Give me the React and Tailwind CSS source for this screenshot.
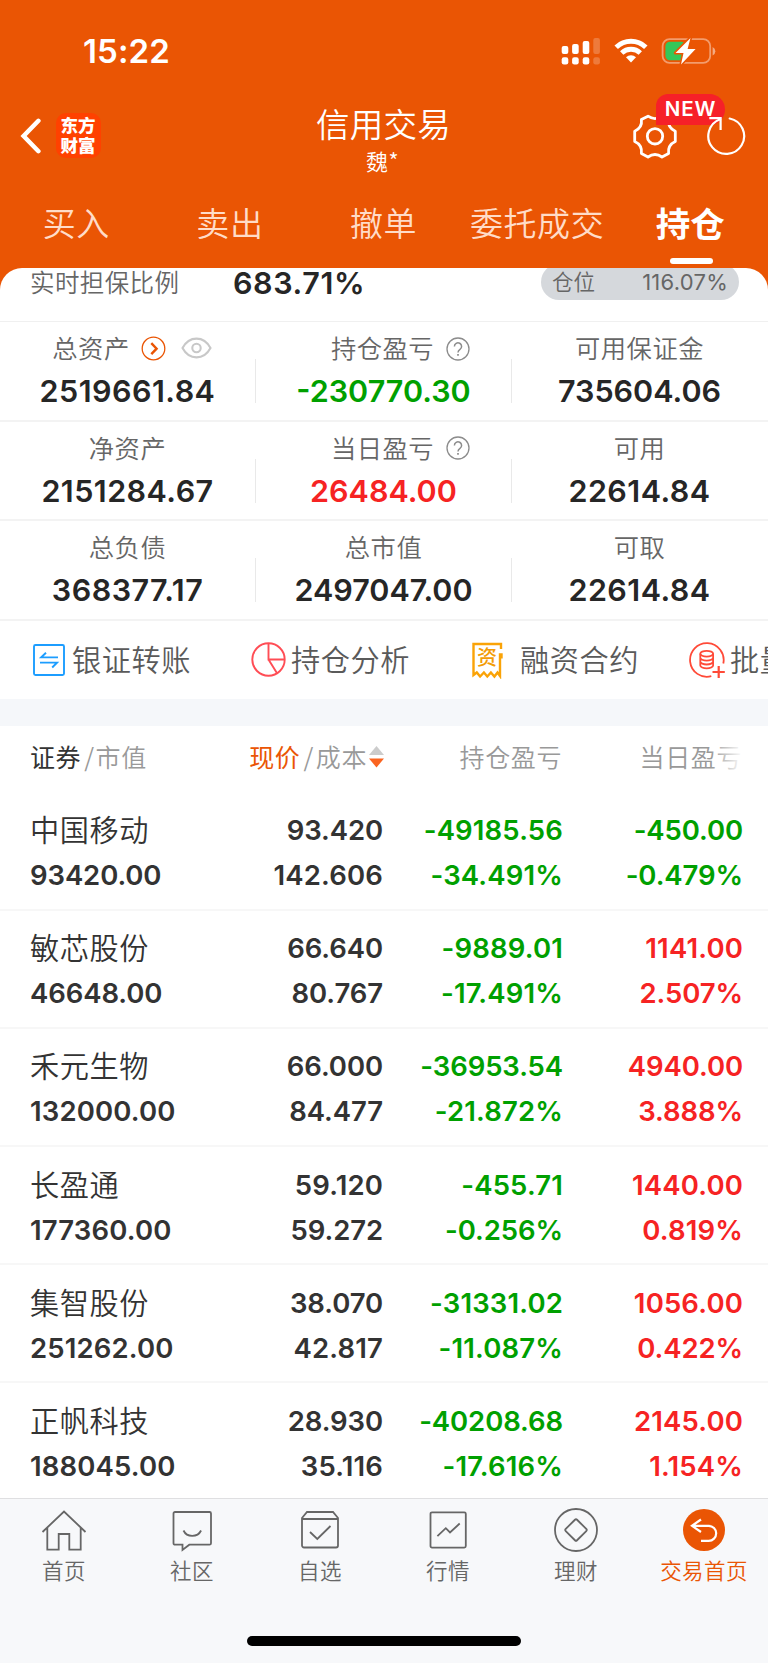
import React, { useState } from "react";

const tabs = ["买入", "卖出", "撤单", "委托成交", "持仓"];

const summary = [
  [
    { label: "总资产", value: "2519661.84", extra: "asset" },
    { label: "持仓盈亏", value: "-230770.30", color: "text-[#00a000]", extra: "help" },
    { label: "可用保证金", value: "735604.06" },
  ],
  [
    { label: "净资产", value: "2151284.67" },
    { label: "当日盈亏", value: "26484.00", color: "text-[#f62323]", extra: "help" },
    { label: "可用", value: "22614.84" },
  ],
  [
    { label: "总负债", value: "368377.17" },
    { label: "总市值", value: "2497047.00" },
    { label: "可取", value: "22614.84" },
  ],
];

const holdings = [
  { name: "中国移动", market: "93420.00", price: "93.420", cost: "142.606", profit: "-49185.56", profitRate: "-34.491%", day: "-450.00", dayRate: "-0.479%" },
  { name: "敏芯股份", market: "46648.00", price: "66.640", cost: "80.767", profit: "-9889.01", profitRate: "-17.491%", day: "1141.00", dayRate: "2.507%" },
  { name: "禾元生物", market: "132000.00", price: "66.000", cost: "84.477", profit: "-36953.54", profitRate: "-21.872%", day: "4940.00", dayRate: "3.888%" },
  { name: "长盈通", market: "177360.00", price: "59.120", cost: "59.272", profit: "-455.71", profitRate: "-0.256%", day: "1440.00", dayRate: "0.819%" },
  { name: "集智股份", market: "251262.00", price: "38.070", cost: "42.817", profit: "-31331.02", profitRate: "-11.087%", day: "1056.00", dayRate: "0.422%" },
  { name: "正帆科技", market: "188045.00", price: "28.930", cost: "35.116", profit: "-40208.68", profitRate: "-17.616%", day: "2145.00", dayRate: "1.154%" },
];

const signColor = (value) =>
  value.startsWith("-") ? "text-[#00a000]" : "text-[#f62323]";

const Num = ({ children }) => (
  <span className={children.includes("1") ? "tracking-[0.15px]" : "tracking-[-0.1px]"}>
    {children}
  </span>
);

const StatusBar = () => (
  <div className="flex h-[102px] items-center pl-[83px] pr-[51px] text-white">
    <span className="font-[Inter] text-[33px] font-semibold leading-none tracking-[0.1px]">
      15:22
    </span>
    <svg className="ml-auto" width="40" height="28" viewBox="0 0 40 28" fill="#fff">
      <rect x="0.7" y="9" width="6.6" height="8" rx="2" />
      <rect x="11.1" y="7" width="6.6" height="10" rx="2" />
      <rect x="21.7" y="4" width="6.6" height="13" rx="2" />
      <rect x="32.3" y="1" width="6.6" height="16" rx="2" opacity="0.22" />
      <rect x="0.7" y="20.2" width="6.6" height="7.2" rx="2.2" />
      <rect x="11.1" y="20.2" width="6.6" height="7.2" rx="2.2" />
      <rect x="21.7" y="20.2" width="6.6" height="7.2" rx="2.2" />
      <rect x="32.3" y="20.2" width="6.6" height="7.2" rx="2.2" opacity="0.22" />
    </svg>
    <svg className="ml-[13px]" width="34" height="26" viewBox="0 0 34 26">
      <path d="M2.2 9.2a21.5 21.5 0 0 1 29.6 0" fill="none" stroke="#fff" strokeWidth="5" />
      <path d="M7.7 15a13.4 13.4 0 0 1 18.6 0" fill="none" stroke="#fff" strokeWidth="4.8" />
      <path d="M12 19.3a7.2 7.2 0 0 1 10 0l-5 5.2z" fill="#fff" />
    </svg>
    <svg className="ml-[13px]" width="56" height="30" viewBox="0 0 56 30">
      <rect x="1.6" y="3.1" width="47.6" height="23.8" rx="7" fill="none" stroke="#fff" strokeOpacity="0.42" strokeWidth="1.8" />
      <path d="M51.6 11v8.4a4.6 4.6 0 0 0 0-8.4z" fill="#fff" opacity="0.5" />
      <rect x="4.4" y="5.8" width="20" height="18.4" rx="4.4" fill="#34c759" />
      <path d="M29.5 2 14.5 17h8L20 28.5 34.6 12.9h-8z" fill="#fff" stroke="#ea5504" strokeWidth="3.2" paintOrder="stroke" strokeLinejoin="round" />
    </svg>
  </div>
);

const TitleBar = () => (
  <div className="flex h-[84px] items-start text-white">
    <div className="flex w-[256px] items-center pl-5 pt-[11px]">
      <svg width="22" height="36" viewBox="0 0 22 36" fill="none" stroke="#fff" strokeWidth="4.5">
        <path d="M18.4 2.8 3.6 18l14.8 15.2" strokeLinecap="round" strokeLinejoin="miter" />
      </svg>
      <div className="ml-[13.5px] flex h-[45px] w-[45px] flex-col items-center justify-center rounded-[10px] bg-[#ff4100] pb-[2px] text-[17.5px] font-black leading-[19.5px]">
        <span>东方</span>
        <span>财富</span>
      </div>
    </div>
    <div className="flex w-[256px] flex-col items-center">
      <h1 className="mr-px mt-1 text-[33.5px] font-[350] leading-[34px] tracking-[0.3px]">信用交易</h1>
      <span className="mr-[3px] mt-2 text-[22px] font-[350] leading-6 tracking-[0.5px]">魏*</span>
    </div>
    <div className="relative w-[256px]">
      <svg className="ml-[120px] mt-[12px]" width="46" height="46" viewBox="0 0 46 46" fill="none" stroke="#fff" strokeWidth="2.8" strokeLinejoin="round">
        <path d="M16 2.2Q23 7 30 2.2L36.6 5.6Q35.5 13.5 43.3 17.2V27.4Q35.5 31 36.6 39.4L30 43Q23 38 16 43L9.4 39.4Q10.5 31 2.7 27.4V17.2Q10.5 13.5 9.4 5.6Z" />
        <circle cx="23" cy="22.3" r="7.7" />
      </svg>
      <span className="absolute left-[144px] top-[-8px] flex h-[31px] w-[69px] items-center justify-center rounded-tl-[14px] rounded-tr-[18px] rounded-br-[18px] bg-[#f62028] font-[Inter] text-[20.5px] font-semibold leading-none tracking-[0.9px]">
        NEW
      </span>
      <svg className="absolute left-[193px] top-[13px]" width="42" height="42" viewBox="0 0 42 42" fill="none" stroke="#fff" strokeWidth="2.2">
        <path d="M24.7 3.5A17.9 17.9 0 1 1 15.2 4.2" strokeLinecap="round" />
        <path d="M4.3 3.2H15.6V15" />
      </svg>
    </div>
  </div>
);

const Tabs = ({ active, onChange }) => (
  <div className="grid h-[82px] grid-cols-5">
    {tabs.map((tab) => (
      <button
        key={tab}
        onClick={() => onChange(tab)}
        className="flex flex-col items-center whitespace-nowrap pt-[18px]"
      >
        {tab === active ? (
          <>
            <span className="mr-[2px] text-[34.5px] font-bold leading-9 text-white">{tab}</span>
            <i className="mt-[18px] h-1.5 w-[43px] rounded-full bg-white" />
          </>
        ) : (
          <span className="mr-px text-[33px] font-[350] leading-9 tracking-[0.6px] text-[#ffdcc8]">{tab}</span>
        )}
      </button>
    ))}
  </div>
);

const HelpIcon = () => (
  <svg className="ml-3 mt-px" width="24" height="24" viewBox="0 0 24 24" fill="none" stroke="#8c8c8c" strokeWidth="1.3">
    <circle cx="12" cy="12" r="11" />
    <path d="M8.4 9.4a3.6 3.6 0 1 1 5.6 3c-1.3.9-2 1.5-2 3.2" strokeWidth="1.5" />
    <path d="M12 17v1.8" strokeWidth="1.7" />
  </svg>
);

const AssetIcons = () => (
  <>
    <svg className="ml-[11px] mt-px" width="25" height="25" viewBox="0 0 25 25" fill="none" stroke="#ea5504">
      <circle cx="12.5" cy="12.5" r="11.3" strokeWidth="1.3" />
      <path d="m10.3 7.2 5.3 5.5-5.3 5.5" strokeWidth="2.4" />
    </svg>
    <svg className="ml-[15px] mr-[2px]" width="31" height="22" viewBox="0 0 31 22" fill="none" stroke="#c8c8c8" strokeWidth="2.1">
      <path d="M1.5 11C5 4.5 9.8 1.6 15.5 1.6S26 4.5 29.5 11C26 17.5 21.2 20.4 15.5 20.4S5 17.5 1.5 11Z" />
      <circle cx="15.5" cy="11" r="4.2" />
    </svg>
  </>
);

const extraPadding = { help: "pl-[33px]", asset: "pl-[10px]" };

const SummaryCell = ({ item, last }) => (
  <div className="relative flex flex-col items-center pt-[12px]">
    <div className={`flex h-[28px] items-center text-[25.3px] font-[350] leading-7 tracking-[0.5px] text-[#666] ${extraPadding[item.extra] || "pr-[1px]"}`}>
      <span className="-mt-[2px]">{item.label}</span>
      {item.extra === "help" && <HelpIcon />}
      {item.extra === "asset" && <AssetIcons />}
    </div>
    <div
      className={`mr-[1px] mt-[13px] font-[Inter] text-[30.5px] font-semibold leading-[32px] ${
        item.value.includes("1") ? "tracking-[0.45px]" : ""
      } ${item.color || "text-[#262626]"}`}
    >
      {item.value}
    </div>
    {!last && <i className="absolute right-0 top-[37px] h-[44px] w-px bg-[#e9e9e9]" />}
  </div>
);

const actions = [
  {
    label: "银证转账",
    style: "pl-[32px] w-[219px]",
    gap: "ml-[6px]",
    icon: (
      <svg width="34" height="34" viewBox="0 0 34 34" fill="none" stroke="#1c9dff" strokeWidth="1.9">
        <rect x="2" y="2" width="30" height="30" rx="1.5" />
        <path d="M26 14.4H9.2L14 9.8M8 19.6h17l-4.8 4.9" />
      </svg>
    ),
  },
  {
    label: "持仓分析",
    style: "pl-[32px] w-[218px]",
    gap: "ml-[5px]",
    icon: (
      <svg width="35" height="35" viewBox="0 0 35 35" fill="none" stroke="#ff4d55" strokeWidth="1.9">
        <circle cx="17.5" cy="17.5" r="16.2" />
        <path d="M17.5 1.5v16h16M17.5 17.5l8.4 13.6" />
      </svg>
    ),
  },
  {
    label: "融资合约",
    style: "pl-[34px] w-[251px]",
    gap: "ml-[17px]",
    icon: (
      <span className="relative flex h-[36px] w-[32px] justify-center">
        <svg className="absolute inset-0" width="33" height="37" viewBox="0 0 33 37" fill="none" stroke="#faa307" strokeWidth="2.4">
          <path d="M30 7V2H2.5V33l3.3-2.5 3.3 4 3.8-4 3.4 4 3.6-4 3.5 4 3.1-4L29 34V12.500h1.5v4" />
        </svg>
        <span className="relative pt-[4px] text-[20px] font-medium leading-[22px] text-[#f39c06]">资</span>
      </span>
    ),
  },
  {
    label: "批量下单",
    style: "",
    gap: "ml-[4px]",
    icon: (
      <svg width="38" height="38" viewBox="0 0 38 38" fill="none" stroke="#ff4a38" strokeWidth="1.8">
        <path d="M35.3 22.5A16.8 16.8 0 1 0 23.3 35.2" />
        <ellipse cx="18.7" cy="12.7" rx="6.4" ry="2.9" />
        <path d="M12.3 12.7v11.8c0 1.6 2.9 2.9 6.4 2.9s6.4-1.3 6.4-2.9V12.7M12.3 16.7c0 1.6 2.9 2.9 6.4 2.9s6.4-1.3 6.4-2.9M12.3 20.6c0 1.6 2.9 2.9 6.4 2.9s6.4-1.3 6.4-2.9" />
        <path d="M24.5 31h12.3M30.7 25v12" strokeWidth="2.2" />
      </svg>
    ),
  },
];

const Actions = () => (
  <div className="flex h-[78.5px] items-center overflow-hidden">
    {actions.map((a) => (
      <button key={a.label} className={`flex shrink-0 items-center ${a.style}`}>
        {a.icon}
        <span className={`-mt-[4px] whitespace-nowrap text-[29.2px] font-[350] leading-8 tracking-[0.6px] text-[#5a5a5a] ${a.gap}`}>
          {a.label}
        </span>
      </button>
    ))}
  </div>
);

const TableHeader = () => (
  <div className="flex h-[67px] items-center pb-[6px] text-[25px] font-[350] leading-7 tracking-[0.6px] text-[#999]">
    <div className="w-[200px] pl-[30px]">
      <span className="font-normal text-[#333]">证券</span>
      <span className="ml-[3px] mr-px">/</span>市值
    </div>
    <div className="flex w-[184px] items-center justify-end">
      <span className="font-normal text-[#ea5504]">现价</span>
      <span className="ml-[3px] mr-[2px]">/</span>成本
      <svg className="ml-0.5 mt-[2px]" width="15" height="22" viewBox="0 0 15 22">
        <path d="M7.5 0 15 9H0z" fill="#ccc" />
        <path d="M7.5 21.5 0 12.5h15z" fill="#fa6420" />
      </svg>
    </div>
    <div className="w-[179px] pr-px text-right">持仓盈亏</div>
    <div className="relative w-[180px] pr-px text-right">
      当日盈亏
      <i className="absolute right-0 top-0 h-full w-[32px] bg-linear-to-r from-white/0 to-white" />
    </div>
  </div>
);

const HoldingRow = ({ row }) => (
  <div className="flex h-[118.2px] border-b-2 border-[#f7f7f7] pt-[19.5px] font-[Inter] text-[27.5px] font-semibold leading-[36px] text-[#333]">
    <div className="flex w-[200px] flex-col gap-[9px] pl-[30px]">
      <span className="-mt-[2px] mb-[2px] font-['Noto_Sans_CJK_SC'] text-[29.2px] font-[350] tracking-[0.6px]">{row.name}</span>
      <Num>{row.market}</Num>
    </div>
    <div className="flex w-[183px] flex-col gap-[9px] text-right">
      <Num>{row.price}</Num>
      <Num>{row.cost}</Num>
    </div>
    <div className={`flex w-[180px] flex-col gap-[9px] text-right ${signColor(row.profit)}`}>
      <Num>{row.profit}</Num>
      <Num>{row.profitRate}</Num>
    </div>
    <div className={`flex w-[180px] flex-col gap-[9px] text-right ${signColor(row.day)}`}>
      <Num>{row.day}</Num>
      <Num>{row.dayRate}</Num>
    </div>
  </div>
);

const navItems = [
  {
    label: "首页",
    icon: <path d="M1.5 23 23 2.5 44.5 23M6.3 19v21.7h11.400V25h10.6v15.700h11.400V19" />,
  },
  {
    label: "社区",
    icon: (
      <>
        <path d="M6 3h34.5a1.5 1.5 0 0 1 1.5 1.5V34.2a1.5 1.5 0 0 1-1.5 1.5H20.3L13.5 41v-5.3H6a1.5 1.5 0 0 1-1.5-1.5V4.5A1.5 1.5 0 0 1 6 3z" />
        <path d="M14.5 21.5c3.4 7.2 14 7.2 17.6 0" />
      </>
    ),
  },
  {
    label: "自选",
    icon: (
      <>
        <path d="M10 3h26l5 6v27.5a2 2 0 0 1-2 2H7a2 2 0 0 1-2-2V9zM5 10h36" />
        <path d="m13 23 7.3 7L33.5 17" />
      </>
    ),
  },
  {
    label: "行情",
    icon: (
      <>
        <rect x="5.5" y="3.3" width="35.3" height="35.3" rx="1.5" />
        <path d="m12.4 27.2 8.4-8 4.2 4.3 9.7-9" />
      </>
    ),
  },
  {
    label: "理财",
    icon: (
      <>
        <circle cx="23" cy="21" r="21" />
        <rect x="15" y="13" width="16" height="16" rx="1.5" transform="rotate(45 23 21)" />
      </>
    ),
  },
  {
    label: "交易首页",
    active: true,
    icon: (
      <>
        <circle cx="23" cy="21" r="21" fill="#ea5504" stroke="none" />
        <path d="M20 10.5 11 16.8l9 6.2M11.5 16.8h16.200a7.5 7.5 0 0 1 0 15H20" stroke="#fff" strokeWidth="2.2" />
      </>
    ),
  },
];

const BottomNav = () => (
  <nav className="flex h-[165px] flex-col items-center border-t border-[#dfdfe1] bg-[#f7f8fa]">
    <div className="grid w-full grid-cols-6 pt-[10px]">
      {navItems.map((item) => (
        <button
          key={item.label}
          className={`flex flex-col items-center ${item.active ? "text-[#ea5504]" : "text-[#666]"}`}
        >
          <svg className="overflow-visible" width="46" height="44" viewBox="0 0 46 44" fill="none" stroke="currentColor" strokeWidth="1.8">
            {item.icon}
          </svg>
          <span className="mt-[5px] text-[21.5px] font-[350] leading-6 tracking-[0.4px]">{item.label}</span>
        </button>
      ))}
    </div>
    <div className="mt-[54px] h-2.5 w-[274px] rounded-full bg-black" />
  </nav>
);

const App = () => {
  const [active, setActive] = useState("持仓");

  return (
    <div className="flex h-[1663px] w-[768px] flex-col overflow-hidden bg-[#ea5504] font-['Noto_Sans_CJK_SC',sans-serif]">
      <header className="h-[268px] shrink-0">
        <StatusBar />
        <TitleBar />
        <Tabs active={active} onChange={setActive} />
      </header>

      <main className="h-[1230px] shrink-0 overflow-hidden rounded-t-[22px] bg-white">
        <div className="flex h-[54px] border-b border-[#f0f0f0] pl-[30px] pr-[29px]">
          <span className="-mt-px w-[203px] text-[24.5px] font-[350] leading-[30px] tracking-[0.4px] text-[#666]">
            实时担保比例
          </span>
          <span className="font-[Inter] text-[30.5px] font-semibold leading-[30px] tracking-[0.6px] text-[#262626]">683.71%</span>
          <div className="-mt-1 ml-auto flex h-9 w-[198px] items-center justify-between rounded-full bg-[#d5d8dc] px-[11px] text-[21.5px] font-[350] text-[#666]">
            <span className="-mt-[2px]">仓位</span>
            <span className="font-[Inter] text-[22px] font-normal tracking-[0.25px]">116.07%</span>
          </div>
        </div>
        {summary.map((cells, i) => (
          <div key={i} className="grid h-[99.5px] grid-cols-3 border-b-2 border-[#f3f3f3]">
            {cells.map((item, j) => (
              <SummaryCell key={item.label} item={item} last={j === 2} />
            ))}
          </div>
        ))}
        <Actions />
        <div className="h-[26.5px] bg-[#f5f7fa]" />
        <TableHeader />
        {holdings.map((row) => (
          <HoldingRow key={row.name} row={row} />
        ))}
      </main>

      <BottomNav />
    </div>
  );
};

export default App;
